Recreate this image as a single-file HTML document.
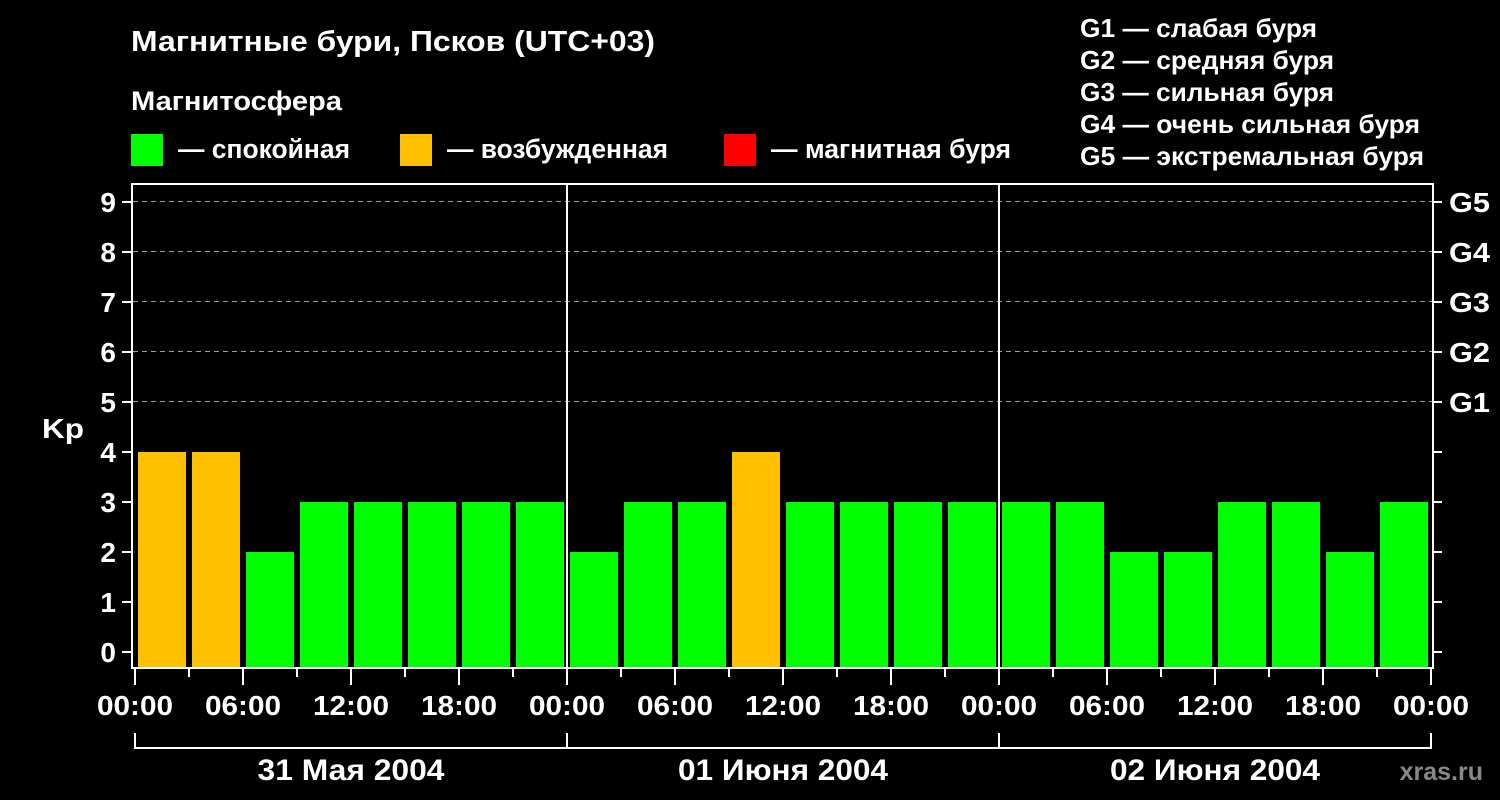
<!DOCTYPE html>
<html><head><meta charset="utf-8"><style>
html,body{margin:0;padding:0;background:#000;width:1500px;height:800px;overflow:hidden}
svg text{font-family:"Liberation Sans",sans-serif;font-weight:bold;fill:#fff}
</style></head><body>
<svg width="1500" height="800" xmlns="http://www.w3.org/2000/svg">
<rect width="1500" height="800" fill="#000"/>
<text x="131" y="51" font-size="29" textLength="524" lengthAdjust="spacingAndGlyphs">Магнитные бури, Псков (UTC+03)</text>
<text x="131" y="110" font-size="27" textLength="211" lengthAdjust="spacingAndGlyphs">Магнитосфера</text>
<rect x="131" y="134" width="32" height="32" fill="#00ff00"/>
<text x="178" y="158" font-size="27" textLength="172" lengthAdjust="spacingAndGlyphs">— спокойная</text>
<rect x="400" y="134" width="32" height="32" fill="#ffc000"/>
<text x="447" y="158" font-size="27" textLength="221" lengthAdjust="spacingAndGlyphs">— возбужденная</text>
<rect x="724" y="134" width="32" height="32" fill="#ff0000"/>
<text x="771" y="158" font-size="27" textLength="240" lengthAdjust="spacingAndGlyphs">— магнитная буря</text>
<g font-size="26">
<text x="1080" y="37" textLength="237" lengthAdjust="spacingAndGlyphs">G1 — слабая буря</text>
<text x="1080" y="69" textLength="254" lengthAdjust="spacingAndGlyphs">G2 — средняя буря</text>
<text x="1080" y="101" textLength="254" lengthAdjust="spacingAndGlyphs">G3 — сильная буря</text>
<text x="1080" y="133" textLength="340" lengthAdjust="spacingAndGlyphs">G4 — очень сильная буря</text>
<text x="1080" y="165" textLength="344" lengthAdjust="spacingAndGlyphs">G5 — экстремальная буря</text>
</g>
<g stroke="#999" stroke-width="1" stroke-dasharray="5,4">
<line x1="133" x2="1433" y1="201.5" y2="201.5"/>
<line x1="133" x2="1433" y1="251.5" y2="251.5"/>
<line x1="133" x2="1433" y1="301.5" y2="301.5"/>
<line x1="133" x2="1433" y1="351.5" y2="351.5"/>
<line x1="133" x2="1433" y1="401.5" y2="401.5"/>
</g>
<g fill="#00ff00">
<rect x="138" y="452" width="48" height="216" fill="#ffc000"/>
<rect x="192" y="452" width="48" height="216" fill="#ffc000"/>
<rect x="246" y="552" width="48" height="116"/>
<rect x="300" y="502" width="48" height="166"/>
<rect x="354" y="502" width="48" height="166"/>
<rect x="408" y="502" width="48" height="166"/>
<rect x="462" y="502" width="48" height="166"/>
<rect x="516" y="502" width="48" height="166"/>
<rect x="570" y="552" width="48" height="116"/>
<rect x="624" y="502" width="48" height="166"/>
<rect x="678" y="502" width="48" height="166"/>
<rect x="732" y="452" width="48" height="216" fill="#ffc000"/>
<rect x="786" y="502" width="48" height="166"/>
<rect x="840" y="502" width="48" height="166"/>
<rect x="894" y="502" width="48" height="166"/>
<rect x="948" y="502" width="48" height="166"/>
<rect x="1002" y="502" width="48" height="166"/>
<rect x="1056" y="502" width="48" height="166"/>
<rect x="1110" y="552" width="48" height="116"/>
<rect x="1164" y="552" width="48" height="116"/>
<rect x="1218" y="502" width="48" height="166"/>
<rect x="1272" y="502" width="48" height="166"/>
<rect x="1326" y="552" width="48" height="116"/>
<rect x="1380" y="502" width="48" height="166"/>
</g>
<g stroke="#fff" stroke-width="2" fill="none">
<rect x="132" y="184" width="1301" height="484"/>
<line x1="567" x2="567" y1="184" y2="668"/>
<line x1="999" x2="999" y1="184" y2="668"/>
<line x1="122" x2="132" y1="202" y2="202"/><line x1="122" x2="132" y1="252" y2="252"/>
<line x1="122" x2="132" y1="302" y2="302"/><line x1="122" x2="132" y1="352" y2="352"/>
<line x1="122" x2="132" y1="402" y2="402"/><line x1="122" x2="132" y1="452" y2="452"/>
<line x1="122" x2="132" y1="502" y2="502"/><line x1="122" x2="132" y1="552" y2="552"/>
<line x1="122" x2="132" y1="602" y2="602"/><line x1="122" x2="132" y1="652" y2="652"/>
<line x1="1433" x2="1442" y1="202" y2="202"/><line x1="1433" x2="1442" y1="252" y2="252"/>
<line x1="1433" x2="1442" y1="302" y2="302"/><line x1="1433" x2="1442" y1="352" y2="352"/>
<line x1="1433" x2="1442" y1="402" y2="402"/><line x1="1433" x2="1442" y1="452" y2="452"/>
<line x1="1433" x2="1442" y1="502" y2="502"/><line x1="1433" x2="1442" y1="552" y2="552"/>
<line x1="1433" x2="1442" y1="602" y2="602"/><line x1="1433" x2="1442" y1="652" y2="652"/>
<path d="M135 668v17M243 668v17M351 668v17M459 668v17M567 668v17M675 668v17M783 668v17M891 668v17M999 668v17M1107 668v17M1215 668v17M1323 668v17M1431 668v17"/>
<path d="M189 668v9M297 668v9M405 668v9M513 668v9M621 668v9M729 668v9M837 668v9M945 668v9M1053 668v9M1161 668v9M1269 668v9M1377 668v9"/>
<path d="M135 733v15H1431V733M567 733v15M999 733v15"/>
</g>
<g font-size="28" text-anchor="end">
<text x="116" y="212">9</text><text x="116" y="262">8</text><text x="116" y="312">7</text>
<text x="116" y="362">6</text><text x="116" y="412">5</text><text x="116" y="462">4</text>
<text x="116" y="512">3</text><text x="116" y="562">2</text><text x="116" y="612">1</text>
<text x="116" y="662">0</text>
</g>
<text x="42" y="438" font-size="28" textLength="42" lengthAdjust="spacingAndGlyphs">Kp</text>
<g font-size="28">
<text x="1449" y="212" textLength="41" lengthAdjust="spacingAndGlyphs">G5</text>
<text x="1449" y="262" textLength="41" lengthAdjust="spacingAndGlyphs">G4</text>
<text x="1449" y="312" textLength="41" lengthAdjust="spacingAndGlyphs">G3</text>
<text x="1449" y="362" textLength="41" lengthAdjust="spacingAndGlyphs">G2</text>
<text x="1449" y="412" textLength="41" lengthAdjust="spacingAndGlyphs">G1</text>
</g>
<g font-size="28" text-anchor="middle">
<text x="135" y="715" textLength="76" lengthAdjust="spacingAndGlyphs">00:00</text>
<text x="243" y="715" textLength="76" lengthAdjust="spacingAndGlyphs">06:00</text>
<text x="351" y="715" textLength="76" lengthAdjust="spacingAndGlyphs">12:00</text>
<text x="459" y="715" textLength="76" lengthAdjust="spacingAndGlyphs">18:00</text>
<text x="567" y="715" textLength="76" lengthAdjust="spacingAndGlyphs">00:00</text>
<text x="675" y="715" textLength="76" lengthAdjust="spacingAndGlyphs">06:00</text>
<text x="783" y="715" textLength="76" lengthAdjust="spacingAndGlyphs">12:00</text>
<text x="891" y="715" textLength="76" lengthAdjust="spacingAndGlyphs">18:00</text>
<text x="999" y="715" textLength="76" lengthAdjust="spacingAndGlyphs">00:00</text>
<text x="1107" y="715" textLength="76" lengthAdjust="spacingAndGlyphs">06:00</text>
<text x="1215" y="715" textLength="76" lengthAdjust="spacingAndGlyphs">12:00</text>
<text x="1323" y="715" textLength="76" lengthAdjust="spacingAndGlyphs">18:00</text>
<text x="1431" y="715" textLength="76" lengthAdjust="spacingAndGlyphs">00:00</text>
<text x="351" y="780" font-size="30" textLength="187" lengthAdjust="spacingAndGlyphs">31 Мая 2004</text>
<text x="783" y="780" font-size="30" textLength="210" lengthAdjust="spacingAndGlyphs">01 Июня 2004</text>
<text x="1215" y="780" font-size="30" textLength="210" lengthAdjust="spacingAndGlyphs">02 Июня 2004</text>
</g>
<text x="1483" y="780" font-size="25" text-anchor="end" style="fill:#888">xras.ru</text>
</svg>
</body></html>
